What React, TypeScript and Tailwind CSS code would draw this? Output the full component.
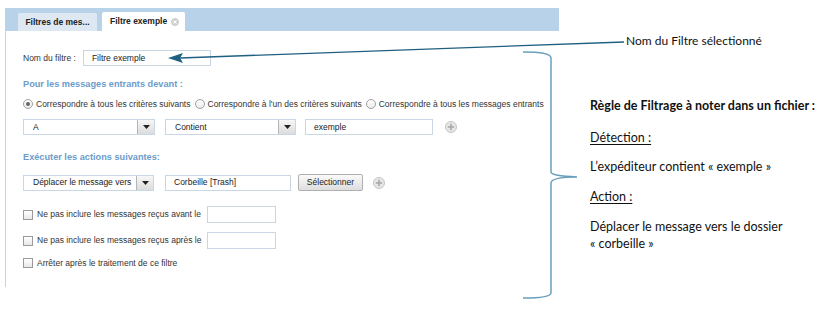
import React from "react";

const ui = { fontFamily: '"Liberation Sans", Arial, sans-serif' };
const note = { fontFamily: 'Lato, "Open Sans", sans-serif' };

function Select({ value, width }: { value: string; width: string }) {
  return (
    <div className={`flex h-[16px] ${width} border border-[#c9d6e3] bg-white`}>
      <div className="flex-1 pl-[9px] flex items-center text-[#222]">{value}</div>
      <div className="w-[17px] flex items-center justify-center border-l border-[#b5b5b5] bg-gradient-to-b from-[#f7f7f7] to-[#dcdcdc]">
        <svg width="7" height="4" viewBox="0 0 7 4">
          <path d="M0 0 L7 0 L3.5 4 Z" fill="#222" />
        </svg>
      </div>
    </div>
  );
}

function Input({ value, width }: { value?: string; width: string }) {
  return (
    <div className={`h-[16px] ${width} border border-[#c9d6e3] bg-white flex items-center pl-[8px] text-[#222]`}>
      {value}
    </div>
  );
}

function Plus() {
  return (
    <svg width="12" height="12" viewBox="0 0 12 12">
      <circle cx="6" cy="6" r="5.5" fill="#e6e6e6" stroke="#c4c4c4" />
      <path d="M6 2.8 V9.2 M2.8 6 H9.2" stroke="#a8a8a8" strokeWidth="1.6" />
    </svg>
  );
}

function Radio({ checked, label }: { checked?: boolean; label: string }) {
  return (
    <div className="flex items-center gap-[3px]">
      <span className="w-[10px] h-[10px] rounded-full border border-[#a0a0a0] bg-gradient-to-b from-white to-[#ececec] flex items-center justify-center">
        {checked && <span className="w-[4px] h-[4px] rounded-full bg-[#666]" />}
      </span>
      <span>{label}</span>
    </div>
  );
}

function Check({ label, input, ml }: { label: string; input?: boolean; ml?: string }) {
  return (
    <div className="flex items-center h-[17px]">
      <span className="w-[10px] h-[10px] border border-[#9a9a9a] bg-gradient-to-b from-white to-[#e8e8e8]" />
      <span className="ml-[4px]">{label}</span>
      {input && <div className={`${ml} h-[17px] w-[69px] border border-[#c9d6e3] bg-white`} />}
    </div>
  );
}

export default function App() {
  return (
    <div className="relative w-[834px] h-[323px] bg-white flex overflow-hidden">
      <div className="ml-[5px] mt-[8px] w-[554px] flex flex-col text-[8.5px] text-[#333]" style={ui}>
        <div className="h-[23px] bg-[#b8d2e9] flex items-end pl-[13px] gap-[5px]">
          <div className="h-[18px] w-[79px] bg-[#dde8f2] rounded-t-[2px] flex items-center justify-center font-bold text-[#222]">
            Filtres de mes...
          </div>
          <div className="h-[19px] w-[83px] bg-white rounded-t-[2px] flex items-center pl-[8px] gap-[4px] font-bold text-[#222]">
            Filtre exemple
            <svg width="8" height="8" viewBox="0 0 8 8">
              <circle cx="4" cy="4" r="3.6" fill="#d4d4d4" stroke="#bcbcbc" strokeWidth="0.6" />
              <path d="M2.5 2.5 L5.5 5.5 M5.5 2.5 L2.5 5.5" stroke="#fff" strokeWidth="1" />
            </svg>
          </div>
        </div>

        <div className="h-[256px] border-l border-[#c8d2dc] pl-[17px] flex flex-col">
          <div className="mt-[19px] flex items-center h-[16px]">
            <span>Nom du filtre :</span>
            <div className="ml-[7px]">
              <Input value="Filtre exemple" width="w-[128px]" />
            </div>
          </div>

          <div className="mt-[13px] h-[12px] flex items-center text-[9.2px] font-bold text-[#6c9ccb]">
            Pour les messages entrants devant :
          </div>

          <div className="mt-[7px] h-[12px] flex items-center gap-[4px]">
            <Radio checked label="Correspondre à tous les critères suivants" />
            <Radio label="Correspondre à l'un des critères suivants" />
            <Radio label="Correspondre à tous les messages entrants" />
          </div>

          <div className="mt-[9px] flex items-center">
            <Select value="A" width="w-[132px]" />
            <div className="ml-[10px]">
              <Select value="Contient" width="w-[131px]" />
            </div>
            <div className="ml-[9px]">
              <Input value="exemple" width="w-[128px]" />
            </div>
            <div className="ml-[12px]">
              <Plus />
            </div>
          </div>

          <div className="mt-[17px] h-[12px] flex items-center text-[9.2px] font-bold text-[#6c9ccb]">
            Exécuter les actions suivantes:
          </div>

          <div className="mt-[10px] flex items-center">
            <Select value="Déplacer le message vers" width="w-[131px]" />
            <div className="ml-[11px]">
              <Input value="Corbeille [Trash]" width="w-[126px]" />
            </div>
            <div className="ml-[7px] h-[17px] w-[65px] border border-[#b0b0b0] rounded-[2px] bg-gradient-to-b from-[#fafafa] to-[#dedede] flex items-center justify-center text-[#222]">
              Sélectionner
            </div>
            <div className="ml-[10px]">
              <Plus />
            </div>
          </div>

          <div className="mt-[15px]">
            <Check label="Ne pas inclure les messages reçus avant le" input ml="ml-[6px]" />
          </div>
          <div className="mt-[9px]">
            <Check label="Ne pas inclure les messages reçus après le" input ml="ml-[6px]" />
          </div>
          <div className="mt-[8px] h-[12px] flex items-center">
            <Check label="Arrêter après le traitement de ce filtre" />
          </div>
        </div>
      </div>

      <div className="ml-[31px] flex flex-col text-[12.5px] text-[#111]" style={note}>
        <div className="mt-[33px] ml-[36px] h-[16px] leading-[16px] text-[12px]">Nom du Filtre sélectionné</div>
        <div className="mt-[49px] h-[16px] leading-[16px] font-bold">Règle de Filtrage à noter dans un fichier :</div>
        <div className="mt-[16px] h-[16px] leading-[16px] underline underline-offset-2">Détection :</div>
        <div className="mt-[13px] h-[16px] leading-[16px]">L’expéditeur contient « exemple »</div>
        <div className="mt-[14px] h-[16px] leading-[16px] underline underline-offset-2">Action :</div>
        <div className="mt-[13px] leading-[17px]">
          Déplacer le message vers le dossier
          <br />« corbeille »
        </div>
      </div>

      <svg className="absolute left-0 top-0 pointer-events-none" width="834" height="323" viewBox="0 0 834 323">
        <path d="M624 42 L180 58" stroke="#1f5f80" strokeWidth="1.3" fill="none" />
        <path d="M168 58 L183 53 L180 58 L183 63 Z" fill="#1f5f80" />
        <path
          d="M523 52 C540 52 551 53 551 58 L551 172 C551 175 560 176 577 177 C560 177 551 179 551 183 L551 293 C551 297 540 298 523 298"
          stroke="#6b9fbd"
          strokeWidth="1.5"
          fill="none"
        />
      </svg>
    </div>
  );
}
